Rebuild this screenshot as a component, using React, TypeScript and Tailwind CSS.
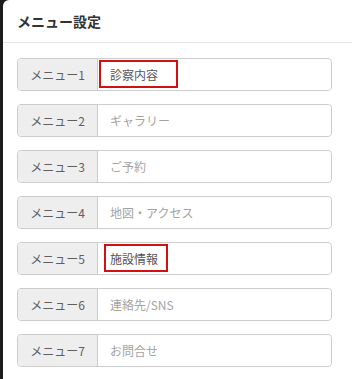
const rows = [
  { label: 'メニュー1', value: '診察内容', mark: { left: 1, w: 79 } },
  { label: 'メニュー2', placeholder: 'ギャラリー' },
  { label: 'メニュー3', placeholder: 'ご予約' },
  { label: 'メニュー4', placeholder: '地図・アクセス' },
  { label: 'メニュー5', value: '施設情報', mark: { left: 6, w: 64 } },
  { label: 'メニュー6', placeholder: '連絡先/SNS' },
  { label: 'メニュー7', placeholder: 'お問合せ' },
];

function MenuRow({ label, value, placeholder, mark }: (typeof rows)[number]) {
  return (
    <div className="flex h-[33px] rounded-[4px] border border-[#cccccc]">
      <div className="w-[80px] shrink-0 flex items-center justify-center bg-[#eeeeee] border-r border-[#cccccc] rounded-l-[4px] text-[12px] text-[#5f5f5f]">
        {label}
      </div>
      <div className="relative flex-1 flex items-center pl-[12px] text-[12px] bg-white rounded-r-[4px]">
        {value ? (
          <span className="text-[#555555]">{value}</span>
        ) : (
          <span className="text-[#a3a3a3]">{placeholder}</span>
        )}
        {mark && (
          <div
            className="absolute top-[1px] h-[28px] border-2 border-[#d30f0f]"
            style={{ left: mark.left, width: mark.w }}
          />
        )}
      </div>
    </div>
  );
}

export default function App() {
  return (
    <div
      className="w-[352px] h-[379px] overflow-hidden bg-[#1c1c1c] pl-[3px]"
      style={{ fontFamily: '"Noto Sans CJK JP", "Noto Sans", sans-serif' }}
    >
      <div className="h-full bg-white rounded-tl-[6px]">
        <div className="h-[43px] flex items-center px-[14px] border-b border-[#e5e5e5]">
          <h1 className="text-[14px] font-bold text-[#333333]">メニュー設定</h1>
        </div>
        <div className="pt-[15px] pl-[14px] pr-[20px] flex flex-col gap-[13px]">
          {rows.map((r) => (
            <MenuRow key={r.label} {...r} />
          ))}
        </div>
      </div>
    </div>
  );
}
